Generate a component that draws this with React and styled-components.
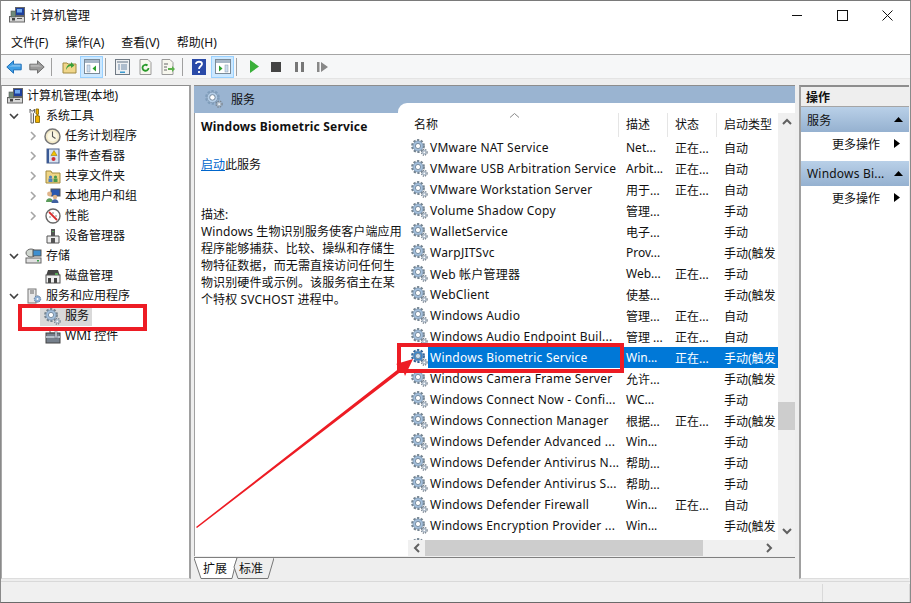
import React from "react";
import styled, { createGlobalStyle } from "styled-components";

const Global = createGlobalStyle`
  html, body { margin: 0; padding: 0; background: #fff; }
  * { box-sizing: border-box; }
  body { font-family: "Noto Sans", "Noto Sans CJK SC", sans-serif; font-size: 12px; color: #111; }
`;

const Window = styled.div`
  width: 911px; height: 603px; display: flex; flex-direction: column; position: relative; overflow: hidden;
  background: #fff; border-top: 1px solid #7a7a7a; border-left: 1px solid #8a8a8a; border-right: 1px solid #8a8a8a; border-bottom: 1px solid #6a6a6a;
`;
const TitleBar = styled.div`display: flex; align-items: center; height: 27px; padding-left: 8px; flex: none;`;
const TitleText = styled.span`flex: 1; line-height: 16px; margin: 2px 0 0 5px;`;
const WinBtn = styled.div`width: 45px; height: 27px; display: flex; align-items: center; justify-content: center; margin-top: 1px;`;
const MenuBar = styled.div`display: flex; height: 27px; flex: none; padding-left: 10px; gap: 17px; align-items: center; border-bottom: 1px solid #a5a5a5;`;
const MenuItem = styled.span`line-height: 16px; margin-top: 4px;`;
const Toolbar = styled.div`display: flex; align-items: center; height: 23px; flex: none; padding-left: 5px; background: #f6f7f8;`;
const ToolBtn = styled.div`
  width: ${p => p.$w || 16}px; height: 22px; margin-left: ${p => p.$ml || 0}px; flex: none;
  display: flex; align-items: center; justify-content: center;
  ${p => p.$on && "background: #cce8ff; border: 1px solid #99d1ff;"}
`;
const ToolSep = styled.div`width: 1px; height: 18px; background: #a0a0a0; margin-left: ${p => p.$ml}px; flex: none;`;
const Main = styled.div`flex: 1; min-height: 0; display: flex; gap: 3px; background: #eeeeee; padding-top: 6px; border-top: 1px solid #e4e4e4;`;
const TreePanel = styled.div`
  width: 190px; flex: none; background: #fff; margin-bottom: 2px; padding-top: 0;
  border-top: 1px solid #8d8d8d; border-left: 1px solid #a8a8a8; border-right: 2px solid #a0a0a0; border-bottom: 1px solid #ddd;
`;
const TreeRow = styled.div`display: flex; align-items: center; height: 20px; padding-left: ${p => p.$pad}px; white-space: nowrap;`;
const Caret = styled.div`width: 14px; flex: none; display: flex; justify-content: center;`;
const TreeIcon = styled.div`width: 25px; height: 20px; flex: none; display: flex; justify-content: center; align-items: center;`;
const TreeSel = styled.div`display: flex; align-items: center; height: 20px; background: ${p => p.$on ? "#d9d9d9" : "transparent"}; padding-right: ${p => p.$on ? 3 : 0}px;`;
const TreeLabel = styled.span`position: relative; top: -1px;`;
const CenterCol = styled.div`flex: 1; min-width: 0; display: flex; flex-direction: column; margin-bottom: 1px; margin-right: 1px;`;
const Band = styled.div`
  height: 28px; flex: none; display: flex; align-items: center; padding: 0 0 1px 11px; gap: 8px;
  background: #9ab4d1; border-top: 1px solid #8d8d8d; font-size: 12px;
`;
const CenterBody = styled.div`flex: 1; min-height: 0; display: flex; background: #fff; border-left: 1px solid #a0a0a0;`;
const Desc = styled.div`width: 203px; flex: none; padding: 6px 0 0 6px; line-height: 17px; white-space: nowrap; position: relative; z-index: 1;`;
const DescTitle = styled.div`font-weight: 700; line-height: 16px; margin-bottom: 21px; letter-spacing: 0.2px;`;
const DescLink = styled.div`margin-bottom: 33px; a { color: #0066cc; text-decoration: underline; }`;
const DescBody = styled.div`letter-spacing: 0.12px;`;
const ListPane = styled.div`
  flex: 1; min-width: 0; margin-top: -10px; background: #fff; border-top-left-radius: 9px; padding: 0 0 0 10px;
  display: flex; flex-direction: column; position: relative; overflow: hidden;
`;
const ListTop = styled.div`flex: 1; min-height: 0; display: flex;`;
const ListMain = styled.div`flex: 1; min-width: 0; overflow: hidden; padding-top: 10px; position: relative;`;
const HeadRow = styled.div`display: flex; height: 24px; align-items: stretch;`;
const Head = styled.div`
  width: ${p => p.$w}px; flex: none; padding: 0 0 2px 7px; display: flex; align-items: center; white-space: nowrap;
  overflow: hidden; border-right: ${p => p.$sep ? "1px solid #e5e5e5" : "0"};
`;
const HeadName = styled(Head)`padding-left: 6px;`;
const SortMark = styled.div`position: absolute; left: 102px; top: 10px; line-height: 0;`;
const Row = styled.div`display: flex; height: 21px; align-items: center;`;
const GearCell = styled.div`width: 20px; flex: none; padding-left: 3px; display: flex; align-items: center;`;
const Cells = styled.div`
  flex: 1; min-width: 0; display: flex; height: 21px; align-items: center; white-space: nowrap;
  background: ${p => p.$sel ? "#0078d7" : "transparent"}; color: ${p => p.$sel ? "#fff" : "#111"};
`;
const Cell = styled.div`width: ${p => p.$w}px; flex: none; padding-left: ${p => p.$pad}px; overflow: hidden;`;
const NameCell = styled(Cell)`letter-spacing: 0.23px;`;
const VScroll = styled.div`
  width: 17px; flex: none; margin-top: 10px; background: #f0f0f0; display: flex; flex-direction: column; align-items: center;
  justify-content: space-between; padding: 5px 0; position: relative;
`;
const VThumb = styled.div`position: absolute; left: 0; top: 289px; width: 17px; height: 28px; background: #cdcdcd;`;
const HScroll = styled.div`height: 16px; flex: none; background: #f0f0f0; display: flex; align-items: center; margin-right: 17px; padding: 0 4px;`;
const HThumb = styled.div`width: 278px; height: 16px; background: #cdcdcd; margin: 0 61px 0 3px;`;
const HCorner = styled.div`position: absolute; right: 0; bottom: 0; width: 17px; height: 16px; background: #f0f0f0;`;
const TabStrip = styled.div`height: 23px; flex: none; background: #eee; border-top: 1px solid #7f7f7f; display: flex; margin-top: 1px;`;
const TabSvg = styled.svg`display: block;`;
const RightPanel = styled.div`
  width: 110px; flex: none; background: #fff; margin: 0 1px 2px 0; border-top: 2px solid #8d8d8d; border-left: 2px solid #a0a0a0; border-bottom: 1px solid #ddd;
`;
const ActHead = styled.div`height: 20px; display: flex; align-items: center; padding-left: 5px; font-weight: 700; background: #eee; border-bottom: 1px solid #a5a5a5;`;
const ActSection = styled.div`
  height: 25px; margin-top: ${p => p.$mt || 0}px; display: flex; align-items: center; justify-content: space-between; padding: 0 6px 0 6px;
  background: linear-gradient(#b9d0e8, #95b1d0); letter-spacing: 0.2px;
`;
const ActRow = styled.div`height: 23px; display: flex; align-items: center; justify-content: space-between; padding: 0 7px 0 31px;`;
const StatusBar = styled.div`height: 21px; flex: none; display: flex; background: #f0f0f0; border-top: 1px solid #d9d9d9;`;
const StatusCell = styled.div`width: ${p => p.$w}px; flex: ${p => p.$grow ? 1 : "none"}; border-right: 1px solid #d9d9d9; margin: 2px 0 0;`;
const RedBox = styled.div`
  position: absolute; left: ${p => p.$x}px; top: ${p => p.$y}px; width: ${p => p.$w}px; height: ${p => p.$h}px;
  border: ${p => p.$t}px solid #ed1c24; pointer-events: none; z-index: 3;
`;
const ArrowLayer = styled.svg`position: absolute; left: -1px; top: -1px; pointer-events: none; z-index: 3;`;

const Gear = ({ size = 17, c = "#a4c0dc", dark = "#74838f", hole = "#fff" }) => (
  <svg width={size} height={size} viewBox="0 0 17 17">
    <circle cx="7" cy="7" r="5.700" fill="none" stroke={dark} strokeWidth="2.400" strokeDasharray="2.200 1.400" />
    <circle cx="7" cy="7" r="5" fill={c} stroke="#7f98b2" strokeWidth=".8" />
    <circle cx="7" cy="7" r="2.600" fill={hole} stroke="#6f8499" strokeWidth="0.900" />
    <circle cx="13.300" cy="13.300" r="2.700" fill="none" stroke="#7a8591" strokeWidth="1.500" strokeDasharray="1.300 .9" />
    <circle cx="13.300" cy="13.300" r="2.300" fill="#aab8c6" />
    <circle cx="13.300" cy="13.300" r="0.900" fill="#fff" />
  </svg>
);
const Computer = () => (
  <svg width="16" height="16" viewBox="0 0 16 16">
    <rect x="6.500" y=".5" width="9" height="8" fill="#1d3f9c" stroke="#666" />
    <rect x="8" y="2" width="5" height="3.500" fill="#6fa8ee" />
    <rect x=".5" y="9.500" width="15" height="5.500" fill="#d8d8d8" stroke="#666" />
    <rect x="3" y="11" width="3" height="2.500" fill="#444" />
    <rect x="8" y="11" width="5" height="1" fill="#555" />
    <rect x="2" y="4" width="4.500" height="6" fill="#6f8a7a" stroke="#555" strokeWidth=".6" />
  </svg>
);
const Tools = () => (
  <svg width="12" height="16" viewBox="0 0 12 16">
    <path d="M2 1v3.500l1 1V15h2.500V5.500l1-1V1L5 3H3.500z" fill="#eee" stroke="#666" />
    <path d="M8 1h2.500v5H10v2h1.500v6.500h-4V8H9V6H8z" fill="#f0b000" stroke="#7a6000" strokeWidth=".8" />
  </svg>
);
const Clock = () => (
  <svg width="17" height="17" viewBox="0 0 17 17">
    <circle cx="8.500" cy="8.500" r="7.500" fill="#f3e9c8" stroke="#777" strokeWidth="1.500" />
    <circle cx="8.500" cy="8.500" r="5" fill="#fbf7e4" />
    <path d="M8.500 3.500V8.500l3 2" fill="none" stroke="#555" strokeWidth="1.100" />
  </svg>
);
const EventLog = () => (
  <svg width="16" height="16" viewBox="0 0 16 16">
    <rect x="2" y="1" width="12" height="14" fill="#d6e2f2" stroke="#4a5f88" />
    <rect x="2" y="1" width="2" height="14" fill="#3a5a96" />
    <path d="M9 2.500l3 5H6z" fill="#f3c300" stroke="#8a6a00" strokeWidth=".5" />
    <circle cx="8.500" cy="11" r="2" fill="#d0323a" />
  </svg>
);
const Share = () => (
  <svg width="16" height="16" viewBox="0 0 16 16">
    <path d="M1 3h5l1 2h8v10H1z" fill="#efd586" stroke="#a38a3c" />
    <circle cx="5.500" cy="9" r="1.600" fill="#4c7fc0" /><rect x="3.500" y="10.500" width="4" height="3.500" fill="#4c7fc0" />
    <circle cx="10.500" cy="9" r="1.600" fill="#4a9a4a" /><rect x="8.500" y="10.500" width="4" height="3.500" fill="#4a9a4a" />
  </svg>
);
const Users = () => (
  <svg width="16" height="16" viewBox="0 0 16 16">
    <rect x="6" y="1" width="9" height="7" fill="#2a58b0" stroke="#555" />
    <circle cx="4.500" cy="6" r="2.400" fill="#e0b48a" /><path d="M1 14c0-5 7-5 7 0z" fill="#5a9a5a" />
    <circle cx="10" cy="9" r="2.200" fill="#e0b48a" /><path d="M6.500 15c0-5 7-5 7 0z" fill="#4060a0" />
  </svg>
);
const Perf = () => (
  <svg width="16" height="16" viewBox="0 0 16 16">
    <circle cx="8" cy="8" r="7" fill="#fff" stroke="#666" strokeWidth="1.400" />
    <path d="M4 4l8 8" stroke="#d82c2c" strokeWidth="1.800" />
    <path d="M8 4v2M12 8h-2M4 9h2" stroke="#888" />
  </svg>
);
const Device = () => (
  <svg width="16" height="16" viewBox="0 0 16 16">
    <rect x="6" y="1" width="4" height="7" fill="#555" />
    <rect x="7.500" y="3" width="1" height="1" fill="#6f6" />
    <path d="M2 8h12v7H2z" fill="#eee" stroke="#555" />
    <rect x="6" y="10" width="4" height="5" fill="#555" />
  </svg>
);
const Storage = () => (
  <svg width="17" height="16" viewBox="0 0 17 16">
    <ellipse cx="6" cy="5" rx="5" ry="4" fill="#cfd6cf" stroke="#6a6a6a" />
    <rect x="8" y="2" width="8" height="6" fill="#3d8fd0" stroke="#555" />
    <rect x="1" y="10" width="15" height="5" fill="#e0e0e0" stroke="#666" />
    <rect x="12" y="12" width="2" height="1.500" fill="#3aa04a" />
  </svg>
);
const Disk = () => (
  <svg width="16" height="16" viewBox="0 0 16 16">
    <path d="M3 2h10l2 6H1z" fill="#444" />
    <rect x="1" y="7" width="14" height="8" fill="#eee" stroke="#555" />
    <rect x="10" y="5.500" width="3" height="1" fill="#6f6" />
    <rect x="3" y="10" width="3" height="5" fill="#444" />
    <rect x="9" y="10" width="3" height="5" fill="#444" />
  </svg>
);
const ServerGear = () => (
  <svg width="16" height="16" viewBox="0 0 16 16">
    <rect x="2" y="1" width="8" height="14" fill="#e8e8e8" stroke="#777" />
    <path d="M4 3h4M4 5h4" stroke="#666" />
    <circle cx="11.500" cy="11" r="3.200" fill="#8fb0d4" stroke="#5e7896" strokeDasharray="1.400 1" />
    <circle cx="11.500" cy="11" r="1" fill="#fff" />
  </svg>
);
const Wmi = () => (
  <svg width="16" height="16" viewBox="0 0 16 16">
    <rect x="1" y="5" width="14" height="10" fill="#76808c" stroke="#444" />
    <rect x="5" y="2" width="6" height="3" fill="none" stroke="#555" />
    <rect x="1" y="8" width="14" height="2" fill="#b6c0ca" />
    <rect x="10" y="1" width="2" height="9" fill="#d0d8df" stroke="#556" strokeWidth=".5" />
  </svg>
);

const ChevDown = () => <svg width="10" height="7" viewBox="0 0 10 7"><path d="M1 1l4 4 4-4" fill="none" stroke="#404040" strokeWidth="1.600" /></svg>;
const ChevRight = () => <svg width="7" height="10" viewBox="0 0 7 10"><path d="M1 1l4 4-4 4" fill="none" stroke="#a6a6a6" strokeWidth="1.600" /></svg>;
const Arrow = ({ dir, c }) => (
  <svg width="10" height="8" viewBox="0 0 10 8" style={{ transform: `rotate(${dir}deg)` }}>
    <path d="M1 6l4-4 4 4" fill="none" stroke={c || "#606060"} strokeWidth="2" />
  </svg>
);
const Tri = ({ right }) => (
  <svg width="9" height="9" viewBox="0 0 9 9">
    {right ? <path d="M1 0l6 4.500-6 4.500z" fill="#000" /> : <path d="M0 7l4.500-5 4.500 5z" fill="#000" />}
  </svg>
);

const NavArrow = ({ flip, fill, stroke }) => (
  <svg width="16" height="14" viewBox="0 0 16 14" style={{ transform: flip ? "scaleX(-1)" : "none" }}>
    <path d="M.8 7L7.500.8v3.400h7.700v5.600H7.500v3.400z" fill={fill} stroke={stroke} />
    <path d="M7 4.800h7.500v2H3z" fill="#fff" opacity=".3" />
  </svg>
);
const PanelIcon = ({ side }) => (
  <svg width="16" height="15" viewBox="0 0 16 15">
    <rect x=".5" y=".5" width="15" height="14" fill="#fff" stroke="#7a8a98" />
    <rect x="1" y="1" width="14" height="3" fill="#a8b8c8" />
    {side === "l" ? <>
      <rect x="3" y="6" width="3" height="7" fill="#cde" stroke="#89a" strokeWidth=".5" />
      <path d="M12 6.500L8.500 9.500l3.500 3z" fill="#2aa02a" />
    </> : <>
      <path d="M4 6.500l3.500 3-3.500 3z" fill="#2aa02a" />
      <rect x="10" y="6" width="3" height="7" fill="#cde" stroke="#89a" strokeWidth=".5" />
    </>}
  </svg>
);
const UpFolder = () => (
  <svg width="15" height="15" viewBox="0 0 15 15">
    <path d="M1 4h4l1 1h8v9H1z" fill="#f0d68a" stroke="#a08a40" />
    <path d="M4 11c0-4 3-6 5-6V3l3.500 3.500L9 9V7c-2 0-4 1.500-5 4z" fill="#3aa03a" />
  </svg>
);
const Sheet = ({ children }) => (
  <svg width="16" height="16" viewBox="0 0 16 16">
    <path d="M2 .5h8l3 3v12H2z" fill="#f7f7ee" stroke="#9a9a9a" />
    {children}
  </svg>
);
const Props = () => (
  <svg width="15" height="16" viewBox="0 0 15 16">
    <rect x=".5" y=".5" width="14" height="15" fill="#eef0f2" stroke="#707a84" />
    <rect x="2" y="2" width="11" height="2" fill="#a8b2bc" />
    <path d="M3 6h2M6 6h6M3 8h2M6 8h6M3 10h2M6 10h6" stroke="#6f8aa8" />
    <rect x="5" y="12.500" width="5" height="1.500" fill="#3a9ad0" />
  </svg>
);

const COLS = { name: 191, desc: 49, status: 49, type: 61 };
const rows = [
  ["VMware NAT Service", "Net...", "正在...", "自动"],
  ["VMware USB Arbitration Service", "Arbit...", "正在...", "自动"],
  ["VMware Workstation Server", "用于...", "正在...", "自动"],
  ["Volume Shadow Copy", "管理...", "", "手动"],
  ["WalletService", "电子...", "", "手动"],
  ["WarpJITSvc", "Prov...", "", "手动(触发"],
  ["Web 帐户管理器", "Web...", "正在...", "手动"],
  ["WebClient", "使基...", "", "手动(触发"],
  ["Windows Audio", "管理...", "正在...", "自动"],
  ["Windows Audio Endpoint Buil...", "管理 ...", "正在...", "自动"],
  ["Windows Biometric Service", "Win...", "正在...", "手动(触发", true],
  ["Windows Camera Frame Server", "允许...", "", "手动(触发"],
  ["Windows Connect Now - Confi...", "WC...", "", "手动"],
  ["Windows Connection Manager", "根据...", "正在...", "手动(触发"],
  ["Windows Defender Advanced ...", "Win...", "", "手动"],
  ["Windows Defender Antivirus N...", "帮助...", "", "手动"],
  ["Windows Defender Antivirus S...", "帮助...", "", "手动"],
  ["Windows Defender Firewall", "Win...", "正在...", "自动"],
  ["Windows Encryption Provider ...", "Win...", "", "手动(触发"],
  ["", "", "", ""],
];

const Tree = ({ pad, caret, icon, label, sel, root }) => (
  <TreeRow $pad={pad}>
    {!root && <Caret>{caret === "d" ? <ChevDown /> : caret === "r" ? <ChevRight /> : null}</Caret>}
    <TreeSel $on={sel}>
      <TreeIcon>{icon}</TreeIcon>
      <TreeLabel>{label}</TreeLabel>
    </TreeSel>
  </TreeRow>
);

export default function App() {
  return (
    <>
      <Global />
      <Window>
        <TitleBar>
          <Computer />
          <TitleText>计算机管理</TitleText>
          <WinBtn><svg width="11" height="11"><path d="M0 5.500h10" stroke="#111" /></svg></WinBtn>
          <WinBtn><svg width="11" height="11"><rect x=".5" y=".5" width="10" height="10" fill="none" stroke="#111" /></svg></WinBtn>
          <WinBtn><svg width="11" height="11"><path d="M.5.500l10 10M10.500.500l-10 10" stroke="#111" /></svg></WinBtn>
        </TitleBar>
        <MenuBar>
          <MenuItem>文件(F)</MenuItem><MenuItem>操作(A)</MenuItem><MenuItem>查看(V)</MenuItem><MenuItem>帮助(H)</MenuItem>
        </MenuBar>
        <Toolbar>
          <ToolBtn><NavArrow fill="#3f9fe6" stroke="#1d6fb8" /></ToolBtn>
          <ToolBtn $ml={7}><NavArrow flip fill="#9a9a9a" stroke="#707070" /></ToolBtn>
          <ToolSep $ml={6} />
          <ToolBtn $ml={9}><UpFolder /></ToolBtn>
          <ToolBtn $w={23} $ml={3} $on><PanelIcon side="l" /></ToolBtn>
          <ToolSep $ml={2} />
          <ToolBtn $ml={8}><Props /></ToolBtn>
          <ToolBtn $ml={8}><Sheet><path d="M10.500 9a3 3 0 1 1-1-2.500" fill="none" stroke="#2a9a2a" strokeWidth="1.800" /></Sheet></ToolBtn>
          <ToolBtn $ml={6}><Sheet><path d="M4 5h4M4 8h3M4 11h3" stroke="#666" /><path d="M8 9h4V7l3 3-3 3v-2H8z" fill="#5ab04a" /></Sheet></ToolBtn>
          <ToolSep $ml={6} />
          <ToolBtn $ml={9} $w={14}>
            <svg width="14" height="16" viewBox="0 0 14 16"><rect width="14" height="16" fill="#2a4aa8" /><path d="M4 5c0-3 6-3 6 0 0 2-3 2-3 5M7 12v2" fill="none" stroke="#fff" strokeWidth="1.800" /></svg>
          </ToolBtn>
          <ToolBtn $w={23} $ml={5} $on><PanelIcon side="r" /></ToolBtn>
          <ToolSep $ml={2} />
          <ToolBtn $ml={10} $w={14}><svg width="9" height="13"><path d="M0 0l9 6.500L0 13z" fill="#3ab03a" /></svg></ToolBtn>
          <ToolBtn $ml={10} $w={10}><svg width="10" height="10"><rect width="10" height="10" fill="#444" /></svg></ToolBtn>
          <ToolBtn $ml={14} $w={10}><svg width="10" height="10"><path d="M0 0h3v10H0zM6 0h3v10H6z" fill="#777" /></svg></ToolBtn>
          <ToolBtn $ml={12} $w={12}><svg width="12" height="10"><path d="M0 0h2.500v10H0zM4 0l7 5-7 5z" fill="#888" /></svg></ToolBtn>
        </Toolbar>
        <Main>
          <TreePanel>
            <Tree root pad={0} icon={<Computer />} label="计算机管理(本地)" />
            <Tree pad={5} caret="d" icon={<Tools />} label="系统工具" />
            <Tree pad={24} caret="r" icon={<Clock />} label="任务计划程序" />
            <Tree pad={24} caret="r" icon={<EventLog />} label="事件查看器" />
            <Tree pad={24} caret="r" icon={<Share />} label="共享文件夹" />
            <Tree pad={24} caret="r" icon={<Users />} label="本地用户和组" />
            <Tree pad={24} caret="r" icon={<Perf />} label="性能" />
            <Tree pad={24} icon={<Device />} label="设备管理器" />
            <Tree pad={5} caret="d" icon={<Storage />} label="存储" />
            <Tree pad={24} icon={<Disk />} label="磁盘管理" />
            <Tree pad={5} caret="d" icon={<ServerGear />} label="服务和应用程序" />
            <Tree pad={24} icon={<Gear size={17} />} label="服务" sel />
            <Tree pad={24} icon={<Wmi />} label="WMI 控件" />
          </TreePanel>
          <CenterCol>
            <Band><Gear size={18} c="#b4cde6" dark="#7f9dbb" /><span>服务</span></Band>
            <CenterBody>
              <Desc>
                <DescTitle>Windows Biometric Service</DescTitle>
                <DescLink><a>启动</a>此服务</DescLink>
                <div>描述:</div>
                <DescBody>Windows 生物识别服务使客户端应用<br />程序能够捕获、比较、操纵和存储生<br />物特征数据，而无需直接访问任何生<br />物识别硬件或示例。该服务宿主在某<br />个特权 SVCHOST 进程中。</DescBody>
              </Desc>
              <ListPane>
                <ListTop>
                  <ListMain>
                    <SortMark><svg width="9" height="5"><path d="M0 4.500l4.500-4 4.500 4" fill="none" stroke="#888" /></svg></SortMark>
                    <HeadRow>
                      <HeadName $w={COLS.name + 20} $sep>名称</HeadName>
                      <Head $w={COLS.desc} $sep>描述</Head>
                      <Head $w={COLS.status} $sep>状态</Head>
                      <Head $w={COLS.type}>启动类型</Head>
                    </HeadRow>
                    {rows.map(([n, d, s, t, sel], i) => (
                      <Row key={i}>
                        <GearCell>{sel ? <Gear c="#3f86c8" dark="#2d5f96" hole="#cfe0f0" /> : <Gear />}</GearCell>
                        <Cells $sel={sel}>
                          <NameCell $w={COLS.name} $pad={2}>{n}</NameCell>
                          <Cell $w={COLS.desc} $pad={7}>{d}</Cell>
                          <Cell $w={COLS.status} $pad={7}>{s}</Cell>
                          <Cell $w={COLS.type} $pad={7}>{t}</Cell>
                        </Cells>
                      </Row>
                    ))}
                  </ListMain>
                  <VScroll>
                    <VThumb />
                    <Arrow dir={0} />
                    <Arrow dir={180} />
                  </VScroll>
                </ListTop>
                <HScroll>
                  <Arrow dir={-90} />
                  <HThumb />
                  <Arrow dir={90} />
                </HScroll>
                <HCorner />
              </ListPane>
            </CenterBody>
            <TabStrip>
              <TabSvg width="80" height="22" viewBox="0 0 80 22">
                <path d="M0 0l7 20.500h31l5-20.500" fill="#fff" stroke="#777" />
                <path d="M43 0l-3 9 4 11.500h30L80 0" fill="#eee" stroke="#777" />
                <text x="9" y="15" fontSize="12" fontFamily="Noto Sans CJK SC" fill="#111">扩展</text>
                <text x="45" y="15" fontSize="12" fontFamily="Noto Sans CJK SC" fill="#111">标准</text>
              </TabSvg>
            </TabStrip>
          </CenterCol>
          <RightPanel>
            <ActHead>操作</ActHead>
            <ActSection><span>服务</span><Tri /></ActSection>
            <ActRow><span>更多操作</span><Tri right /></ActRow>
            <ActSection $mt={6}><span>Windows Bi...</span><Tri /></ActSection>
            <ActRow><span>更多操作</span><Tri right /></ActRow>
          </RightPanel>
        </Main>
        <StatusBar>
          <StatusCell $w={822} />
          <StatusCell $grow />
        </StatusBar>
        <RedBox $x={17} $y={303} $w={129} $h={27} $t={4} />
        <RedBox $x={396} $y={342} $w={227} $h={30} $t={4} />
        <ArrowLayer width="911" height="603">
          <path d="M196 527L401 367L396 364L413 359L405 376L403 370L197 528z" fill="#ed1c24" />
        </ArrowLayer>
      </Window>
    </>
  );
}
